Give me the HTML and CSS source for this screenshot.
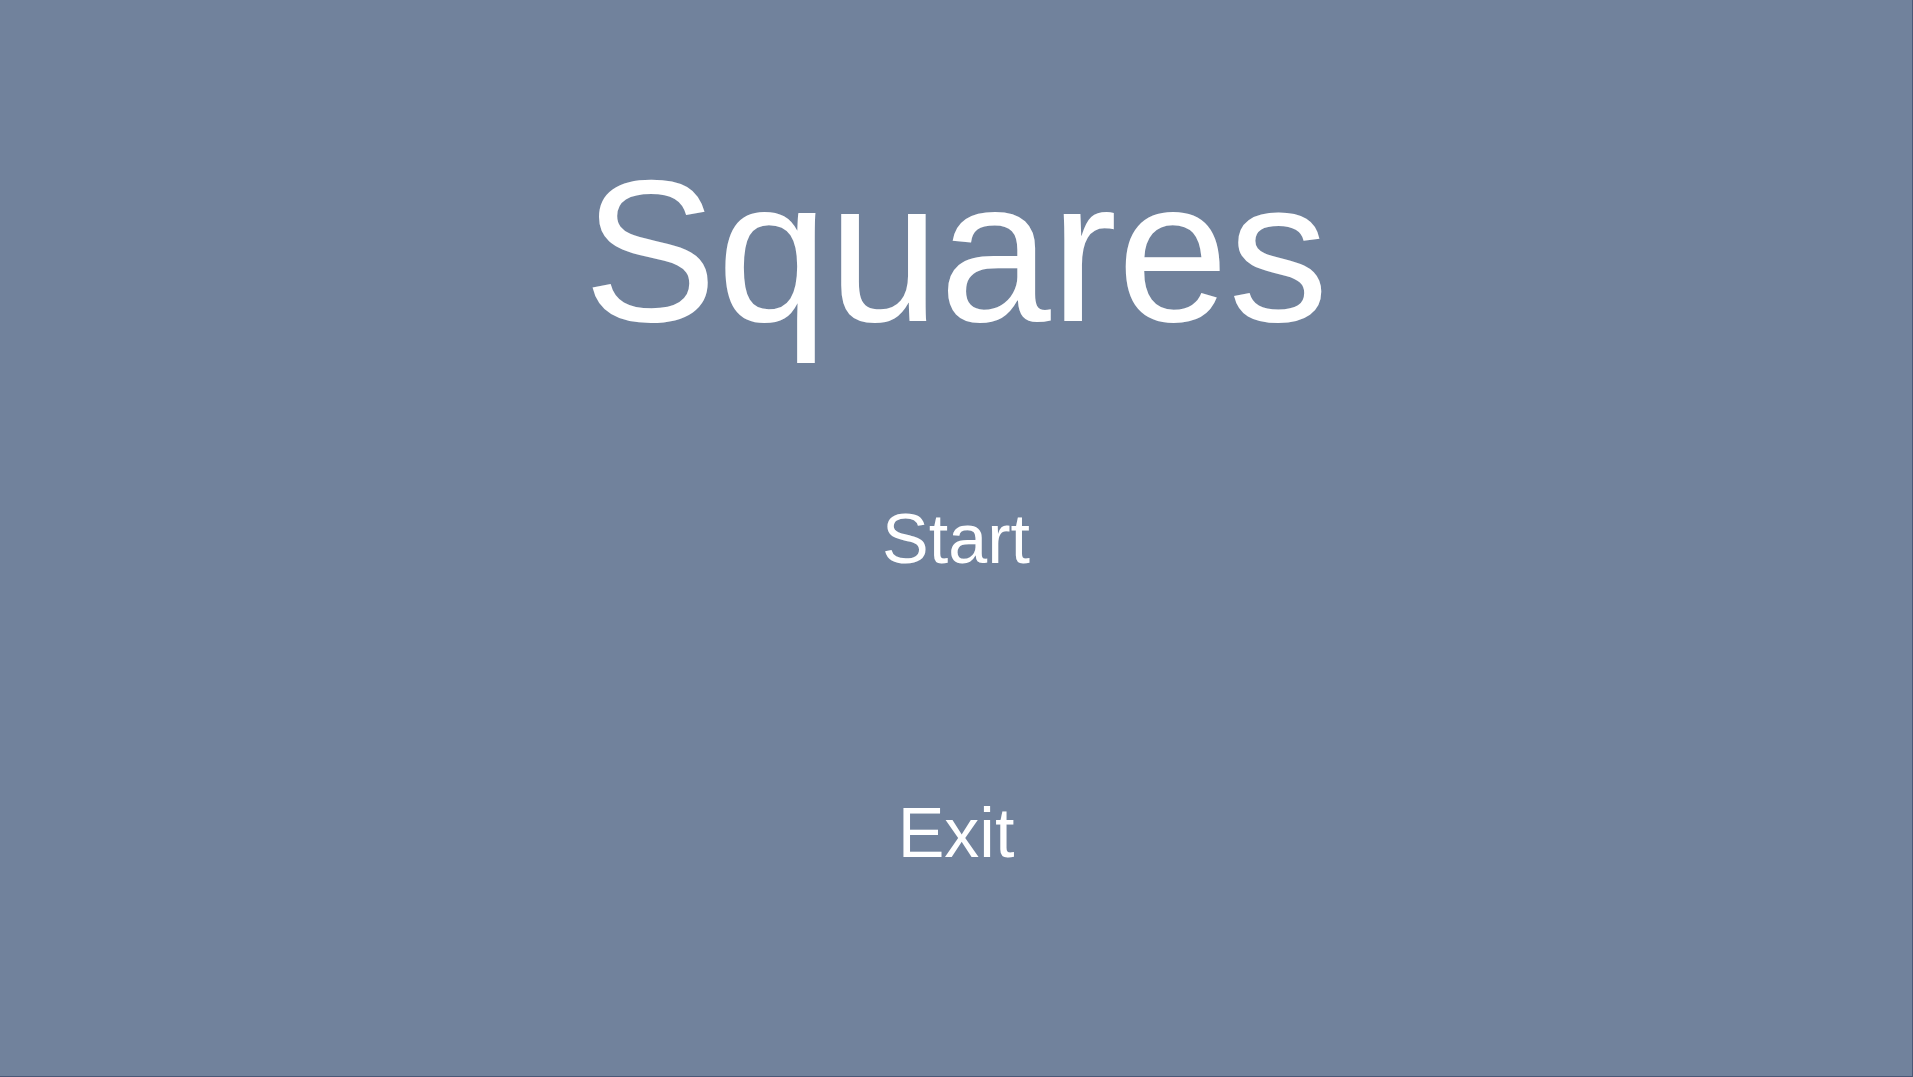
FILE: index.html
```html
<!DOCTYPE html>
<html>
<head>
<meta charset="utf-8">
<link rel="stylesheet" href="styles.css">
</head>
<body>
<div class="screen">
  <h1 class="title">Squares</h1>
  <nav class="menu">
    <div class="menu-item menu-start">Start</div>
    <div class="menu-item menu-exit">Exit</div>
  </nav>
</div>
</body>
</html>
```
FILE: styles.css
```css
html, body {
  margin: 0;
  padding: 0;
  height: 100%;
}
body {
  background: #71829c;
  font-family: "Liberation Sans", Arial, sans-serif;
  color: #ffffff;
  overflow: hidden;
}
.screen {
  box-sizing: border-box;
  height: 100%;
  display: flex;
  flex-direction: column;
  align-items: center;
  padding-top: 152px;
  border-right: 1px solid #4a5877;
  border-bottom: 1px solid #4a5877;
}
.title {
  margin: 0;
  font-size: 200px;
  line-height: 1;
  font-weight: normal;
  transform: scaleY(1.015);
  transform-origin: 50% 85%;
}
.menu {
  display: flex;
  flex-direction: column;
  align-items: center;
  margin-top: 152px;
  gap: 224px;
}
.menu-item {
  font-size: 70px;
  line-height: 1;
}
```
